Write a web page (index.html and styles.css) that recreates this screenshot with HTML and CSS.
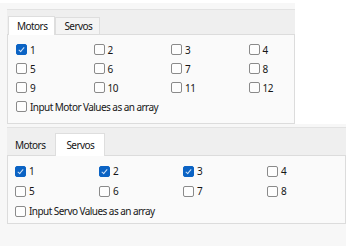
FILE: index.html
```html
<!DOCTYPE html>
<html lang="en">
<head>
    <meta charset="UTF-8">
    <meta name="viewport" content="width=device-width, initial-scale=1.0">
    <title>Motor and Servo Selection</title>
    <link rel="stylesheet" href="styles.css">
</head>
<body>
<div class="widget widget-motors">
    <div class="tabbar">
        <div class="tab active">Motors</div>
        <div class="tab">Servos</div>
    </div>
    <div class="panel">
        <div class="grid">
            <label class="check"><input type="checkbox" checked> 1</label>
            <label class="check"><input type="checkbox"> 2</label>
            <label class="check"><input type="checkbox"> 3</label>
            <label class="check"><input type="checkbox"> 4</label>
            <label class="check"><input type="checkbox"> 5</label>
            <label class="check"><input type="checkbox"> 6</label>
            <label class="check"><input type="checkbox"> 7</label>
            <label class="check"><input type="checkbox"> 8</label>
            <label class="check"><input type="checkbox"> 9</label>
            <label class="check"><input type="checkbox"> 10</label>
            <label class="check"><input type="checkbox"> 11</label>
            <label class="check"><input type="checkbox"> 12</label>
        </div>
        <label class="check"><input type="checkbox"> Input Motor Values as an array</label>
    </div>
</div>

<div class="widget widget-servos">
    <div class="tabbar">
        <div class="tab">Motors</div>
        <div class="tab active">Servos</div>
    </div>
    <div class="panel">
        <div class="grid">
            <label class="check"><input type="checkbox" checked> 1</label>
            <label class="check"><input type="checkbox" checked> 2</label>
            <label class="check"><input type="checkbox" checked> 3</label>
            <label class="check"><input type="checkbox"> 4</label>
            <label class="check"><input type="checkbox"> 5</label>
            <label class="check"><input type="checkbox"> 6</label>
            <label class="check"><input type="checkbox"> 7</label>
            <label class="check"><input type="checkbox"> 8</label>
        </div>
        <label class="check"><input type="checkbox"> Input Servo Values as an array</label>
    </div>
</div>
</body>
</html>
```
FILE: styles.css
```css
body {
    margin: 0;
    background-color: #ffffff;
    font-family: 'Noto Sans', sans-serif;
    font-size: 10px;
    letter-spacing: -0.55px;
    color: #161616;
}
.widget {
    background-color: #f7f7f7;
    padding-left: 7px;
}
.widget-motors {
    width: 288px;
    margin-top: 3px;
    padding-top: 6px;
}
.widget-servos {
    width: 339px;
    height: 122px;
    padding-top: 3px;
}
.tabbar {
    display: flex;
    align-items: flex-end;
    background-color: #efefef;
    border-top: 1px solid #e2e2e2;
    padding-left: 1px;
}
.widget-motors .tabbar {
    height: 24px;
}
.widget-servos .tabbar {
    height: 27px;
}
.tab {
    padding: 0 7px 0 8px;
    height: 16px;
    line-height: 16px;
    border: 1px solid #dedede;
    border-bottom: none;
    background-color: #f4f4f4;
}
.tab.active {
    background-color: #ffffff;
    height: 18px;
    line-height: 18px;
    position: relative;
    z-index: 1;
    margin-bottom: -1px;
}
.widget-servos .tab {
    border-color: transparent;
    background-color: transparent;
    padding: 0 9px 0 6px;
    height: 20px;
    line-height: 20px;
}
.widget-servos .tab.active {
    background-color: #ffffff;
    border-color: #dedede;
    padding: 0 10px;
    height: 22px;
    line-height: 22px;
}
.panel {
    background-color: #fafafa;
    border: 1px solid #dcdcdc;
}
.widget-motors .panel {
    padding: 5px 0 7px 8px;
}
.widget-servos .panel {
    padding: 5px 0 2px 7px;
}
.grid {
    display: grid;
}
.widget-motors .grid {
    grid-template-columns: repeat(4, 77.5px);
}
.widget-servos .grid {
    grid-template-columns: repeat(4, 84px);
}
.check {
    display: flex;
    align-items: center;
    gap: 3px;
    white-space: nowrap;
}
.widget-motors .check {
    height: 19px;
}
.widget-servos .check {
    height: 20px;
}
.check input {
    appearance: none;
    -webkit-appearance: none;
    width: 11px;
    height: 11px;
    margin: 0;
    border: 1px solid #8a8a8a;
    border-radius: 2px;
    background-color: #fdfdfd;
    position: relative;
}
.check input:checked {
    background-color: #0b63c4;
    border-color: #0b63c4;
}
.check input:checked::after {
    content: '';
    position: absolute;
    left: 3px;
    top: 1px;
    width: 2px;
    height: 5px;
    border: solid #cfe2f7;
    border-width: 0 1px 1px 0;
    transform: rotate(40deg);
}
```
